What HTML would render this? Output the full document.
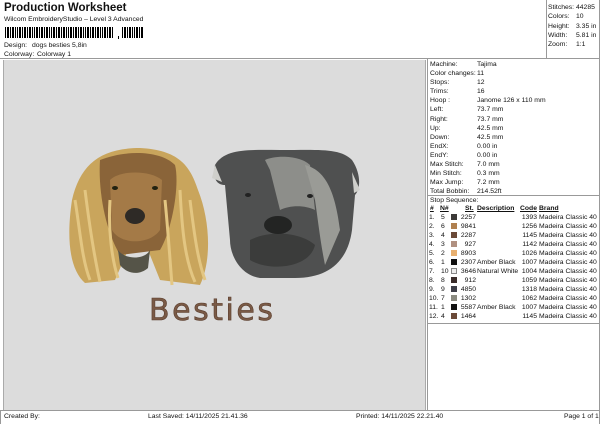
<!DOCTYPE html>
<html><head><meta charset="utf-8"><style>
*{margin:0;padding:0;box-sizing:border-box}
body{width:600px;height:424px;background:#fff;position:relative;overflow:hidden;font-family:"Liberation Sans",sans-serif;color:#111;font-size:6.8px;line-height:1}
.a{position:absolute;white-space:nowrap}
</style></head><body>
<div class="a" style="left:4px;top:3px;font-size:11.5px;font-weight:bold">Production Worksheet</div>
<div class="a" style="left:4px;top:17px;font-size:6.8px">Wilcom EmbroideryStudio – Level 3 Advanced</div>
<svg class="a" style="left:5px;top:27px" width="140" height="12">
<g fill="#000">
<rect x="0" y="0" width="1" height="11"/><rect x="2" y="0" width="2" height="11"/><rect x="5" y="0" width="1" height="11"/><rect x="7" y="0" width="2" height="11"/><rect x="10" y="0" width="1" height="11"/><rect x="12" y="0" width="1" height="11"/><rect x="14" y="0" width="2" height="11"/><rect x="17" y="0" width="1" height="11"/><rect x="19" y="0" width="2" height="11"/><rect x="22" y="0" width="1" height="11"/><rect x="24" y="0" width="2" height="11"/><rect x="27" y="0" width="1" height="11"/><rect x="29" y="0" width="1" height="11"/><rect x="31" y="0" width="2" height="11"/><rect x="34" y="0" width="1" height="11"/><rect x="36" y="0" width="2" height="11"/><rect x="39" y="0" width="1" height="11"/><rect x="41" y="0" width="2" height="11"/><rect x="44" y="0" width="1" height="11"/><rect x="46" y="0" width="1" height="11"/><rect x="48" y="0" width="2" height="11"/><rect x="51" y="0" width="1" height="11"/><rect x="53" y="0" width="2" height="11"/><rect x="56" y="0" width="1" height="11"/><rect x="58" y="0" width="2" height="11"/><rect x="61" y="0" width="1" height="11"/><rect x="63" y="0" width="1" height="11"/><rect x="65" y="0" width="2" height="11"/><rect x="68" y="0" width="1" height="11"/><rect x="70" y="0" width="2" height="11"/><rect x="73" y="0" width="1" height="11"/><rect x="75" y="0" width="2" height="11"/><rect x="78" y="0" width="1" height="11"/><rect x="80" y="0" width="1" height="11"/><rect x="82" y="0" width="2" height="11"/><rect x="85" y="0" width="1" height="11"/><rect x="87" y="0" width="2" height="11"/><rect x="90" y="0" width="1" height="11"/><rect x="92" y="0" width="2" height="11"/><rect x="95" y="0" width="1" height="11"/><rect x="97" y="0" width="1" height="11"/><rect x="99" y="0" width="2" height="11"/><rect x="102" y="0" width="1" height="11"/><rect x="104" y="0" width="2" height="11"/><rect x="107" y="0" width="1" height="11"/>
<rect x="113" y="9" width="1" height="3"/>
<rect x="117" y="0" width="1" height="11"/><rect x="119" y="0" width="2" height="11"/><rect x="122" y="0" width="1" height="11"/><rect x="124" y="0" width="2" height="11"/><rect x="127" y="0" width="1" height="11"/><rect x="129" y="0" width="1" height="11"/><rect x="131" y="0" width="2" height="11"/><rect x="134" y="0" width="1" height="11"/><rect x="136" y="0" width="2" height="11"/></g></svg>
<div class="a" style="left:4px;top:43px">Design:</div><div class="a" style="left:32px;top:43px">dogs besties 5,8in</div>
<div class="a" style="left:4px;top:52px">Colorway:</div><div class="a" style="left:37px;top:52px">Colorway 1</div>
<div class="a" style="left:0;top:58px;width:600px;border-top:1px solid #999"></div>
<div class="a" style="left:546px;top:0;height:58px;border-left:1px solid #999"></div>
<div class="a" style="left:548px;top:3px;line-height:9.3px">Stitches:<br>Colors:<br>Height:<br>Width:<br>Zoom:</div>
<div class="a" style="left:576px;top:3px;line-height:9.3px">44285<br>10<br>3.35 in<br>5.81 in<br>1:1</div>
<div class="a" style="left:3px;top:60px;width:423px;height:350px;background:#dcdcdc;border-left:1px solid #aaa;border-right:1px solid #aaa"></div>
<svg class="a" style="left:0;top:0" width="426" height="424">
<g>
<path d="M72 200 C66 240 70 270 85 283 L115 280 L128 250 L148 250 L160 280 L200 285 C212 260 210 220 198 190 C190 165 178 150 140 148 C100 148 80 165 72 200Z" fill="#c9a55c"/>
<path d="M100 160 C125 150 160 150 175 165 C180 185 172 230 160 250 L120 255 C105 230 98 190 100 160Z" fill="#8a6439"/>
<path d="M110 180 C120 170 150 170 162 180 L160 230 C150 245 120 245 112 230Z" fill="#a47a47"/>
<ellipse cx="135" cy="216" rx="10" ry="8" fill="#2e2a26"/>
<ellipse cx="115" cy="188" rx="3" ry="2" fill="#221"/><ellipse cx="155" cy="188" rx="3" ry="2" fill="#221"/>
<path d="M118 250 C125 260 145 260 150 250 L148 268 C140 275 128 275 120 265Z" fill="#555448"/>
<path d="M75 200 C80 230 82 260 90 280 M85 190 C90 230 95 260 100 282 M180 190 C182 230 185 260 195 282 M190 200 C195 240 198 260 205 280 M110 200 C108 230 112 260 118 278 M165 200 C168 230 170 260 172 285" stroke="#e3c682" stroke-width="3" fill="none"/>
<path d="M215 165 C225 148 250 150 280 150 C320 150 340 148 352 160 C362 175 360 190 355 195 L352 230 C348 260 330 278 295 278 L260 278 C240 275 230 255 230 240 L225 185 C218 185 212 180 215 165Z" fill="#4f5050"/>
<path d="M265 160 C275 155 300 155 310 165 L315 210 C305 205 290 205 280 210 L270 170Z" fill="#8d8e8a"/>
<path d="M305 165 C325 170 335 190 340 230 L325 265 C320 240 318 220 315 200Z" fill="#9a9b96"/>
<path d="M250 240 C270 230 300 232 315 245 C310 268 270 272 250 260Z" fill="#3b3c3b"/>
<ellipse cx="278" cy="225" rx="14" ry="9" fill="#232423"/>
<ellipse cx="248" cy="195" rx="3" ry="2" fill="#222"/><ellipse cx="310" cy="196" rx="3" ry="2" fill="#222"/>
<path d="M215 165 L212 178 L222 182Z" fill="#cfcfcb"/><path d="M352 172 L360 190 L354 193Z" fill="#cfcfcb"/>
</g>
<text x="149" y="320" font-family="DejaVu Sans,sans-serif" font-size="30" fill="#7a5a46" stroke="#5a3e2e" stroke-width="0.6" textLength="124">Besties</text>
</svg>
<div class="a" style="left:427px;top:58px;width:173px;height:352px;border-left:1px solid #999"></div>
<div class="a" style="left:430px;top:60px;line-height:9.1px">Machine:<br>Color changes:<br>Stops:<br>Trims:<br>Hoop :<br>Left:<br>Right:<br>Up:<br>Down:<br>EndX:<br>EndY:<br>Max Stitch:<br>Min Stitch:<br>Max Jump:<br>Total Bobbin:</div>
<div class="a" style="left:477px;top:60px;line-height:9.1px">Tajima<br>11<br>12<br>16<br>Janome 126 x 110 mm<br>73.7 mm<br>73.7 mm<br>42.5 mm<br>42.5 mm<br>0.00 in<br>0.00 in<br>7.0 mm<br>0.3 mm<br>7.2 mm<br>214.52ft</div>
<div class="a" style="left:427px;top:195px;width:173px;border-top:1px solid #999"></div>
<div class="a" style="left:430px;top:198px">Stop Sequence:</div>
<div class="a" style="left:430px;top:206px;font-weight:bold;text-decoration:underline">#</div>
<div class="a" style="left:440px;top:206px;font-weight:bold;text-decoration:underline">N#</div>
<div class="a" style="left:465px;top:206px;font-weight:bold;text-decoration:underline">St.</div>
<div class="a" style="left:477px;top:206px;font-weight:bold;text-decoration:underline">Description</div>
<div class="a" style="left:520px;top:206px;font-weight:bold;text-decoration:underline">Code</div>
<div class="a" style="left:539px;top:206px;font-weight:bold;text-decoration:underline">Brand</div>
<div class="a" style="left:429px;top:213px;line-height:9px">1.<br>2.<br>3.<br>4.<br>5.<br>6.<br>7.<br>8.<br>9.<br>10.<br>11.<br>12.</div>
<div class="a" style="left:441px;top:213px;line-height:9px">5<br>6<br>4<br>3<br>2<br>1<br>10<br>8<br>9<br>7<br>1<br>4</div>
<div class="a" style="left:451px;top:213px;width:7px">
<div style="height:9px;padding-top:1px"><div style="width:6px;height:6px;background:#3c3a38"></div></div>
<div style="height:9px;padding-top:1px"><div style="width:6px;height:6px;background:#b0804f"></div></div>
<div style="height:9px;padding-top:1px"><div style="width:6px;height:6px;background:#6b4a38"></div></div>
<div style="height:9px;padding-top:1px"><div style="width:6px;height:6px;background:#b09080"></div></div>
<div style="height:9px;padding-top:1px"><div style="width:6px;height:6px;background:#e8b070"></div></div>
<div style="height:9px;padding-top:1px"><div style="width:6px;height:6px;background:#111"></div></div>
<div style="height:9px;padding-top:1px"><div style="width:6px;height:6px;background:#eee;border:1px solid #888"></div></div>
<div style="height:9px;padding-top:1px"><div style="width:6px;height:6px;background:#3a2c2a"></div></div>
<div style="height:9px;padding-top:1px"><div style="width:6px;height:6px;background:#3e3e48"></div></div>
<div style="height:9px;padding-top:1px"><div style="width:6px;height:6px;background:#8a8a80"></div></div>
<div style="height:9px;padding-top:1px"><div style="width:6px;height:6px;background:#111"></div></div>
<div style="height:9px;padding-top:1px"><div style="width:6px;height:6px;background:#6b4a38"></div></div>
</div>
<div class="a" style="left:458px;top:213px;width:18px;text-align:right;line-height:9px">2257<br>9841<br>2287<br>927<br>8903<br>2307<br>3646<br>912<br>4850<br>1302<br>5587<br>1464</div>
<div class="a" style="left:477px;top:213px;line-height:9px"><br><br><br><br><br>Amber Black<br>Natural White<br><br><br><br>Amber Black<br></div>
<div class="a" style="left:518px;top:213px;width:19px;text-align:right;line-height:9px">1393<br>1256<br>1145<br>1142<br>1026<br>1007<br>1004<br>1059<br>1318<br>1062<br>1007<br>1145</div>
<div class="a" style="left:539px;top:213px;line-height:9px">Madeira Classic 40<br>Madeira Classic 40<br>Madeira Classic 40<br>Madeira Classic 40<br>Madeira Classic 40<br>Madeira Classic 40<br>Madeira Classic 40<br>Madeira Classic 40<br>Madeira Classic 40<br>Madeira Classic 40<br>Madeira Classic 40<br>Madeira Classic 40</div>
<div class="a" style="left:427px;top:323px;width:173px;border-top:1px solid #999"></div>
<div class="a" style="left:0;top:410px;width:600px;border-top:1px solid #999"></div>
<div class="a" style="left:0;top:410px;height:14px;border-left:1px solid #999"></div>
<div class="a" style="left:599px;top:0;height:424px;border-left:1px solid #999"></div>
<div class="a" style="left:4px;top:414px">Created By:</div>
<div class="a" style="left:148px;top:414px">Last Saved: 14/11/2025 21.41.36</div>
<div class="a" style="left:356px;top:414px">Printed: 14/11/2025 22.21.40</div>
<div class="a" style="left:564px;top:414px">Page 1 of 1</div>
</body></html>
